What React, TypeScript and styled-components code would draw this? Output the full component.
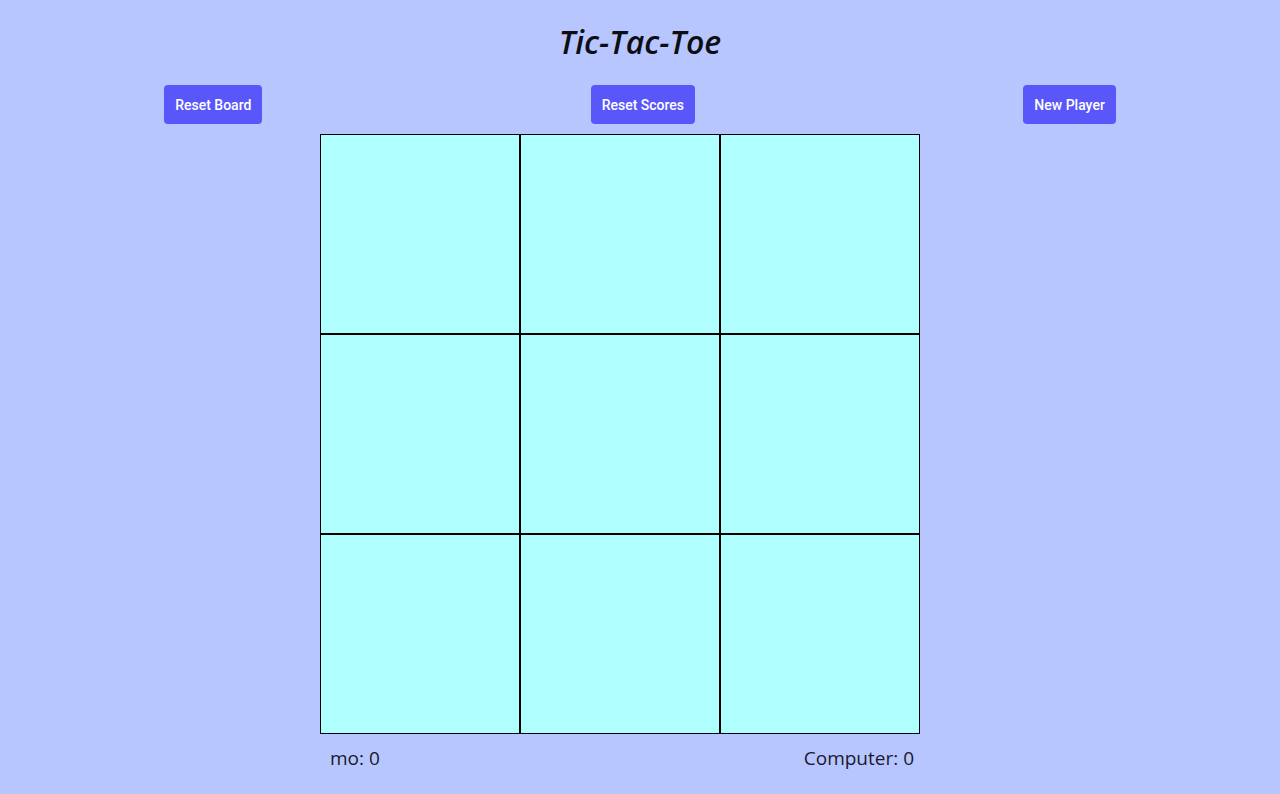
import React from "react";
import styled, { createGlobalStyle } from "styled-components";

const Global = createGlobalStyle`
  html, body { margin: 0; padding: 0; background: #b8c6ff; }
  body { font-family: "Open Sans", sans-serif; }
`;

const Page = styled.div`
  display: flex;
  flex-direction: column;
  align-items: center;
  min-height: 794px;
`;

const Title = styled.h1`
  margin: 22px 0 0;
  font-family: "Open Sans", sans-serif;
  font-style: italic;
  font-weight: 600;
  font-size: 32px;
  line-height: 40px;
  color: #0d0d14;
`;

const Toolbar = styled.div`
  width: 100%;
  display: flex;
  justify-content: space-around;
  margin-top: 23px;
`;

const Button = styled.button`
  height: 39px;
  padding: 0 11px;
  border: none;
  border-radius: 4px;
  background: #5a57fa;
  color: #ffffff;
  font-family: Roboto, "Liberation Sans", sans-serif;
  font-size: 14px;
  font-weight: 500;
  cursor: pointer;
`;

const GameArea = styled.div`
  align-self: flex-start;
  margin-left: 25%;
  width: 600px;
  display: flex;
  flex-direction: column;
`;

const Board = styled.div`
  margin-top: 10px;
  display: grid;
  grid-template-columns: repeat(3, 200px);
  grid-template-rows: repeat(3, 200px);
`;

const Cell = styled.div`
  box-sizing: border-box;
  border: 1px solid #000;
  background: #b0ffff;
`;

const Scores = styled.div`
  box-sizing: border-box;
  padding: 0 6px 0 10px;
  margin-top: 12px;
  display: flex;
  justify-content: space-between;
  font-family: "Open Sans", sans-serif;
  font-size: 19px;
  line-height: 24px;
  color: #1a1a2e;
`;

export default function App() {
  return (
    <Page>
      <Global />
      <Title>Tic-Tac-Toe</Title>
      <Toolbar>
        <Button>Reset Board</Button>
        <Button>Reset Scores</Button>
        <Button>New Player</Button>
      </Toolbar>
      <GameArea>
        <Board>
          {Array.from({ length: 9 }).map((_, i) => (
            <Cell key={i} />
          ))}
        </Board>
        <Scores>
          <span>mo: 0</span>
          <span>Computer: 0</span>
        </Scores>
      </GameArea>
    </Page>
  );
}
